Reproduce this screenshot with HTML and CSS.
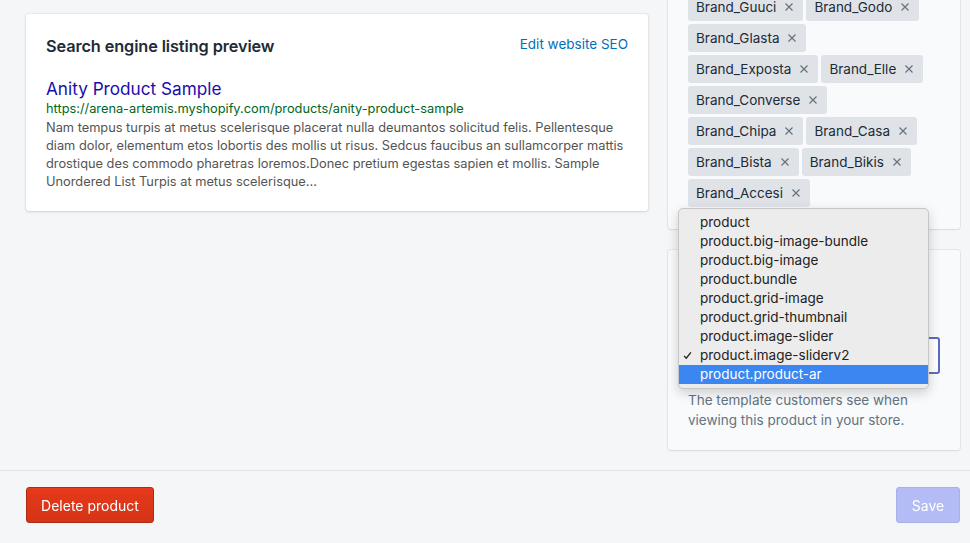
FILE: index.html
```html
<!DOCTYPE html>
<html lang="en">
<head>
<meta charset="utf-8">
<title>Product</title>
<link rel="stylesheet" href="styles.css">
</head>
<body>
<div class="page">
  <div class="layout">
    <div class="main-col">
      <section class="card seo-card">
        <div class="card-header">
          <h2 class="card-title">Search engine listing preview</h2>
          <a class="link" href="#">Edit website SEO</a>
        </div>
        <div class="serp">
          <div class="serp-title">Anity Product Sample</div>
          <div class="serp-url">https://arena-artemis.myshopify.com/products/anity-product-sample</div>
          <div class="serp-desc">Nam tempus turpis at metus scelerisque placerat nulla deumantos solicitud felis. Pellentesque diam dolor, elementum etos lobortis des mollis ut risus. Sedcus faucibus an sullamcorper mattis drostique des commodo pharetras loremos.Donec pretium egestas sapien et mollis. Sample Unordered List Turpis at metus scelerisque...</div>
        </div>
      </section>
    </div>
    <div class="side-col">
      <section class="card side-card tags-card">
        <div class="tags">
          <span class="tag">Brand_Guuci<svg class="x" viewBox="0 0 10 10"><path d="M1.5 1.5l7 7M8.5 1.5l-7 7"/></svg></span>
          <span class="tag">Brand_Godo<svg class="x" viewBox="0 0 10 10"><path d="M1.5 1.5l7 7M8.5 1.5l-7 7"/></svg></span>
          <span class="tag">Brand_Glasta<svg class="x" viewBox="0 0 10 10"><path d="M1.5 1.5l7 7M8.5 1.5l-7 7"/></svg></span>
          <span class="tag">Brand_Exposta<svg class="x" viewBox="0 0 10 10"><path d="M1.5 1.5l7 7M8.5 1.5l-7 7"/></svg></span>
          <span class="tag">Brand_Elle<svg class="x" viewBox="0 0 10 10"><path d="M1.5 1.5l7 7M8.5 1.5l-7 7"/></svg></span>
          <span class="tag">Brand_Converse<svg class="x" viewBox="0 0 10 10"><path d="M1.5 1.5l7 7M8.5 1.5l-7 7"/></svg></span>
          <span class="tag">Brand_Chipa<svg class="x" viewBox="0 0 10 10"><path d="M1.5 1.5l7 7M8.5 1.5l-7 7"/></svg></span>
          <span class="tag">Brand_Casa<svg class="x" viewBox="0 0 10 10"><path d="M1.5 1.5l7 7M8.5 1.5l-7 7"/></svg></span>
          <span class="tag">Brand_Bista<svg class="x" viewBox="0 0 10 10"><path d="M1.5 1.5l7 7M8.5 1.5l-7 7"/></svg></span>
          <span class="tag">Brand_Bikis<svg class="x" viewBox="0 0 10 10"><path d="M1.5 1.5l7 7M8.5 1.5l-7 7"/></svg></span>
          <span class="tag">Brand_Accesi<svg class="x" viewBox="0 0 10 10"><path d="M1.5 1.5l7 7M8.5 1.5l-7 7"/></svg></span>
        </div>
      </section>
      <section class="card side-card template-card">
        <div class="title-space"></div>
        <div class="label-space"></div>
        <div class="select"></div>
        <p class="help">The template customers see when viewing this product in your store.</p>
        <ul class="popup">
          <li class="opt">product</li>
          <li class="opt">product.big-image-bundle</li>
          <li class="opt">product.big-image</li>
          <li class="opt">product.bundle</li>
          <li class="opt">product.grid-image</li>
          <li class="opt">product.grid-thumbnail</li>
          <li class="opt">product.image-slider</li>
          <li class="opt checked"><svg class="check" viewBox="0 0 10 10"><path d="M1.2 5.4l2.4 2.6L8.8 1.6"/></svg>product.image-sliderv2</li>
          <li class="opt active">product.product-ar</li>
        </ul>
      </section>
    </div>
  </div>
  <footer class="footer">
    <button class="btn btn-danger">Delete product</button>
    <button class="btn btn-primary" disabled>Save</button>
  </footer>
</div>
</body>
</html>
```

FILE: styles.css
```css
* { box-sizing: border-box; }
html, body { margin: 0; padding: 0; }
body {
  background: #f4f6f8;
  font-family: Inter, "Noto Sans", sans-serif;
  color: #212b36;
  font-size: 14px;
  line-height: 20px;
  overflow: hidden;
  height: 543px;
}
.page { width: 970px; }
.layout {
  display: flex;
  gap: 20px;
  padding: 14px 10px 0 26px;
  align-items: flex-start;
}
.main-col { width: 622px; flex: none; }
.side-col {
  width: 292px;
  flex: none;
  margin-top: -41px;
  display: flex;
  flex-direction: column;
  gap: 21px;
}
.card {
  background: #fff;
  border-radius: 3px;
  box-shadow: 0 0 0 1px rgba(63,63,68,0.05), 0 1px 3px 0 rgba(63,63,68,0.15);
  padding: 20px;
}
.side-card {
  background: #f9fafb;
  box-shadow: 0 0 0 1px rgba(63,63,68,0.07), 0 1px 2px 0 rgba(63,63,68,0.08);
}
.tags-card { padding-bottom: 22px; }
.card-header {
  display: flex;
  justify-content: space-between;
  align-items: center;
}
.card-title {
  margin: 0;
  font-size: 16.3px;
  font-weight: 600;
  line-height: 24px;
  letter-spacing: -0.1px;
}
.link {
  color: #006fbb;
  text-decoration: none;
  font-size: 13.5px;
  margin-top: -4px;
}
.serp { margin-top: 20px; }
.serp-title {
  color: #1a0dab;
  font-size: 17.2px;
  line-height: 22px;
}
.serp-url {
  color: #006621;
  font-size: 12.8px;
  line-height: 18px;
}
.serp-desc {
  color: #545454;
  font-size: 12.8px;
  line-height: 18px;
  margin-top: 1px;
}
.tags {
  display: flex;
  flex-wrap: wrap;
  gap: 3px;
  width: 240px;
}
.tag {
  display: inline-flex;
  align-items: center;
  height: 28px;
  padding: 0 9px 0 8px;
  background: #dfe3e8;
  border-radius: 3px;
  color: #212b36;
  font-size: 13.5px;
  white-space: nowrap;
}
.x {
  width: 10px;
  height: 10px;
  margin-left: 8px;
  fill: none;
  stroke: #637381;
  stroke-width: 1.2;
}
.template-card { position: relative; }
.title-space { height: 24px; margin-bottom: 16px; }
.label-space { height: 20px; margin-bottom: 7px; }
.select {
  height: 37px;
  border: 2px solid #5c6ac4;
  border-radius: 3px;
  background: #fff;
}
.help {
  margin: 16px 0 0;
  color: #637381;
  font-size: 13.5px;
  line-height: 20px;
}
.popup {
  position: absolute;
  left: 10px;
  top: -42px;
  width: 251px;
  margin: 0;
  padding: 4px 0 4px;
  list-style: none;
  background: #ececec;
  border: 1px solid #c6c6c6;
  border-radius: 5px;
  box-shadow: 0 4px 12px rgba(0,0,0,0.18);
  font-size: 13.5px;
  color: #222;
}
.opt {
  position: relative;
  height: 19px;
  line-height: 19px;
  padding-left: 21px;
  white-space: nowrap;
}
.opt.active {
  background: #3b86f0;
  color: #fff;
}
.check {
  position: absolute;
  left: 4px;
  top: 5px;
  width: 9px;
  height: 9px;
  fill: none;
  stroke: #222;
  stroke-width: 1.5;
}
.footer {
  position: fixed;
  left: 0;
  right: 0;
  top: 470px;
  border-top: 1px solid #dfe3e8;
  display: flex;
  justify-content: space-between;
  padding: 16px 10px 0 26px;
}
.btn {
  height: 36px;
  border-radius: 3px;
  font-family: inherit;
  font-size: 14px;
  padding: 0 12px;
  color: #fff;
  white-space: nowrap;
}
.btn-danger {
  width: 128px;
  background: linear-gradient(#e6391a, #d53417);
  border: 1px solid #b02b13;
  box-shadow: inset 0 1px 0 0 #e73d1f;
}
.btn-primary {
  width: 64px;
  background: #b3bcf5;
  border: 1px solid #a8b0e8;
  color: #fff;
}
```
